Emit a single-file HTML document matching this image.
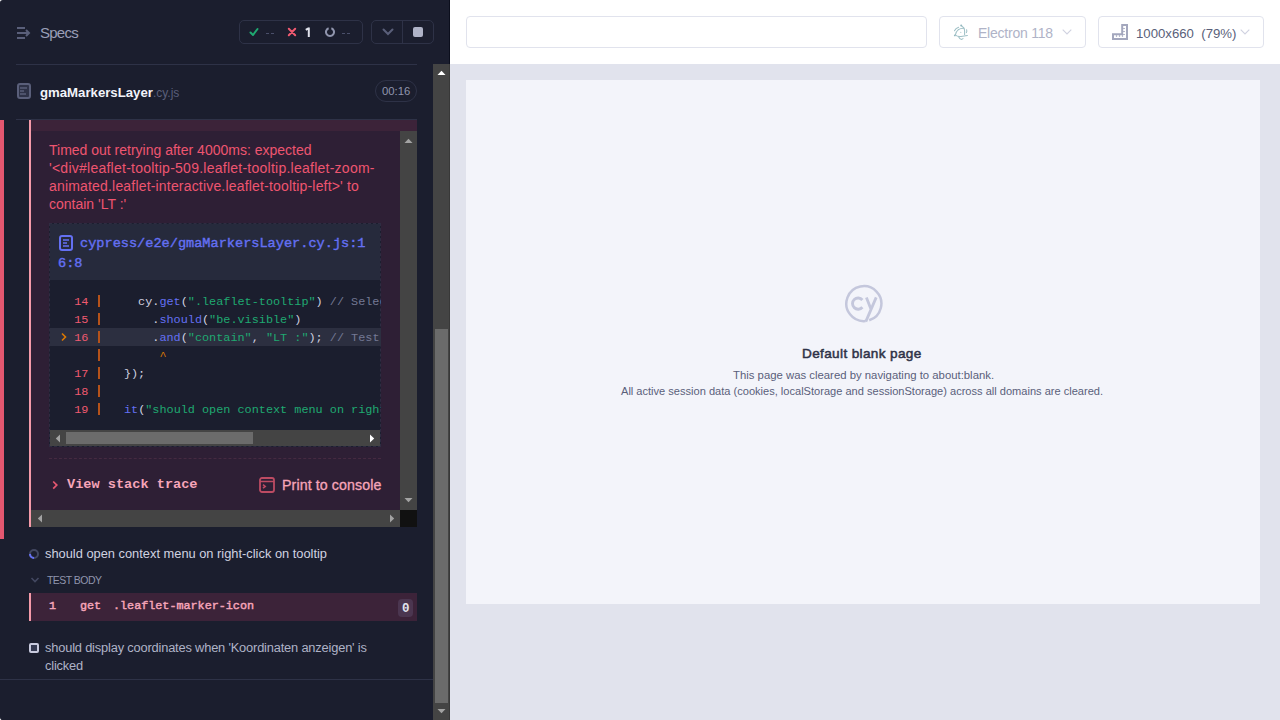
<!DOCTYPE html>
<html><head><meta charset="utf-8">
<style>
*{box-sizing:border-box;margin:0;padding:0}
html,body{width:1280px;height:720px;overflow:hidden;background:#e1e3ed;font-family:"Liberation Sans",sans-serif}
.a{position:absolute}
.t{position:absolute;white-space:pre;line-height:1}
.mono{font-family:"Liberation Mono",monospace}
#left{left:0;top:0;width:450px;height:720px;background:#1b1e2e;overflow:hidden}
#right{left:450px;top:0;width:830px;height:720px;background:#e1e3ed;overflow:hidden}
</style></head><body>
<div id="left" class="a">
  <!-- header -->
  <svg class="a" style="left:16px;top:26px" width="16" height="14" viewBox="0 0 16 14">
    <g stroke="#5a5f7a" stroke-width="2" fill="none">
      <path d="M1 2h8M1 7h12M1 12h8"/>
      <path d="M10 4l3 3-3 3" stroke-linejoin="miter"/>
    </g>
  </svg>
  <div class="t" style="left:40px;top:25px;font-size:15px;color:#9a9eb7;letter-spacing:-0.75px">Specs</div>

  <div class="a" style="left:239px;top:20px;width:124px;height:24px;border:1px solid #2e3247;border-radius:5px"></div>
  <svg class="a" style="left:249px;top:27px" width="10" height="10" viewBox="0 0 10 10"><path d="M1.5 5.5l2.5 2.5 4.5-6" stroke="#1fa971" stroke-width="2" fill="none" stroke-linecap="round" stroke-linejoin="round"/></svg>
  <div class="a" style="left:266px;top:33px;width:3px;height:1px;background:#4a4f6a"></div>
  <div class="a" style="left:271px;top:33px;width:3px;height:1px;background:#4a4f6a"></div>
  <svg class="a" style="left:287px;top:27px" width="10" height="10" viewBox="0 0 10 10"><path d="M1.8 1.8l6.4 6.4M8.2 1.8l-6.4 6.4" stroke="#f05a70" stroke-width="2" fill="none" stroke-linecap="round"/></svg>
  <svg class="a" style="left:305px;top:27px" width="6" height="10" viewBox="0 0 6 10"><path d="M3.8 0.5V10M3.8 1L0.8 2.8" stroke="#e1e3ed" stroke-width="2" fill="none"/></svg>
  <svg class="a" style="left:325px;top:27px" width="10" height="10" viewBox="0 0 10 10"><path d="M3.63 1.24A4 4 0 1 0 6.37 1.24" stroke="#9095ad" stroke-width="2" fill="none"/></svg>
  <div class="a" style="left:342px;top:33px;width:3px;height:1px;background:#4a4f6a"></div>
  <div class="a" style="left:347px;top:33px;width:3px;height:1px;background:#4a4f6a"></div>

  <div class="a" style="left:371px;top:20px;width:63px;height:24px;border:1px solid #2e3247;border-radius:5px"></div>
  <div class="a" style="left:402px;top:21px;width:1px;height:22px;background:#2e3247"></div>
  <svg class="a" style="left:382px;top:28px" width="12" height="8" viewBox="0 0 12 8"><path d="M1.5 1.5l4.5 4.5 4.5-4.5" stroke="#5a5f7a" stroke-width="2" fill="none" stroke-linecap="round"/></svg>
  <div class="a" style="left:413px;top:27px;width:10px;height:10px;background:#afb3c7;border-radius:2px"></div>

  <div class="a" style="left:16px;top:64px;width:401px;height:1px;background:#2e3247"></div>

  <!-- spec file row -->
  <svg class="a" style="left:17px;top:83px" width="14" height="16" viewBox="0 0 14 16">
    <rect x="1" y="1" width="12" height="14" rx="2" stroke="#5a5f7a" stroke-width="2" fill="#2e3247"/>
    <path d="M3 5h7M3 8h4M3 11h6" stroke="#5a5f7a" stroke-width="1.5"/>
  </svg>
  <div class="t" style="left:40px;top:86px;font-size:13.2px;font-weight:bold;color:#f3f4fa">gmaMarkersLayer<span style="font-weight:normal;color:#5a5f7a;font-size:12px">.cy.js</span></div>
  <div class="a" style="left:375px;top:80px;width:42px;height:22px;border:1px solid #2e3247;border-radius:11px"></div>
  <div class="t" style="left:382px;top:86px;font-size:11.3px;color:#9095ad">00:16</div>

  <div class="a" style="left:16px;top:119px;width:401px;height:1px;background:#2e3247"></div>

  <!-- error section -->
  <div class="a" style="left:0;top:120px;width:4px;height:419px;background:#e45770"></div>
  <div class="a" style="left:29px;top:120px;width:2px;height:407px;background:#f59aa9"></div>
  <div class="a" style="left:31px;top:120px;width:386px;height:11px;background:#3c2339"></div>
  <div class="a" style="left:31px;top:131px;width:386px;height:396px;background:#2e1f35"></div>

  <div class="t" style="left:49px;top:141px;font-size:14px;line-height:18px;color:#ee5570">Timed out retrying after 4000ms: expected
<span style="letter-spacing:0.25px">'&lt;div#leaflet-tooltip-509.leaflet-tooltip.leaflet-zoom-</span>
<span style="letter-spacing:0.18px">animated.leaflet-interactive.leaflet-tooltip-left&gt;' to</span>
contain 'LT :'</div>

  <!-- code frame -->
  <div class="a" style="left:49px;top:223px;width:332px;height:224px;border:1px dashed #2f2c42;background:#1b1e2e;overflow:hidden">
    <div class="a" style="left:0;top:0;width:332px;height:56px;background:#262a3c"></div>
  </div>
  <svg class="a" style="left:59px;top:235px" width="14" height="16" viewBox="0 0 14 16">
    <rect x="1" y="1" width="12" height="14" rx="2" stroke="#6470f3" stroke-width="2" fill="none"/>
    <path d="M4 5h6M4 8h4M4 11h6" stroke="#6470f3" stroke-width="1.5"/>
  </svg>
  <div class="t mono" style="left:80px;top:234px;font-size:13.6px;line-height:20px;-webkit-text-stroke:0.4px #6470f3;color:#6470f3">cypress/e2e/gmaMarkersLayer.cy.js:1</div>
  <div class="t mono" style="left:58px;top:253.5px;font-size:13.6px;line-height:20px;-webkit-text-stroke:0.4px #6470f3;color:#6470f3">6:8</div>

  <div class="a" style="left:50px;top:280px;width:331px;height:150px;overflow:hidden">
    <div class="a" style="left:0;top:48px;width:331px;height:18px;background:#2c2f40"></div>
    <svg class="a" style="left:10px;top:51px" width="8" height="12" viewBox="0 0 8 12"><path d="M2 2.5l3.5 3.5-3.5 3.5" stroke="#db7903" stroke-width="1.6" fill="none"/></svg>
    <div class="a" style="left:48px;top:15px;width:2px;height:12px;background:#b5521a"></div>
    <div class="a" style="left:48px;top:33px;width:2px;height:12px;background:#b5521a"></div>
    <div class="a" style="left:48px;top:51px;width:2px;height:12px;background:#b5521a"></div>
    <div class="a" style="left:48px;top:69px;width:2px;height:12px;background:#b5521a"></div>
    <div class="a" style="left:48px;top:87px;width:2px;height:12px;background:#b5521a"></div>
    <div class="a" style="left:48px;top:105px;width:2px;height:12px;background:#b5521a"></div>
    <div class="a" style="left:48px;top:123px;width:2px;height:12px;background:#b5521a"></div>
    <div class="t mono" style="left:-4.2px;top:12.5px;font-size:11.83px;line-height:18px;color:#d0d2e0">    <span style="color:#f05a70">14</span>       cy.<span style="color:#6470f3">get</span>(<span style="color:#1fa971">".leaflet-tooltip"</span>) <span style="color:#747994">// Select the tooltip</span>
    <span style="color:#f05a70">15</span>         .<span style="color:#6470f3">should</span>(<span style="color:#1fa971">"be.visible"</span>)
    <span style="color:#f05a70">16</span>         .<span style="color:#6470f3">and</span>(<span style="color:#1fa971">"contain"</span>, <span style="color:#1fa971">"LT :"</span>); <span style="color:#747994">// Test content</span>
                <span style="color:#db7903">^</span>
    <span style="color:#f05a70">17</span>     });
    <span style="color:#f05a70">18</span>
    <span style="color:#f05a70">19</span>     <span style="color:#6470f3">it</span>(<span style="color:#1fa971">"should open context menu on right-click on tooltip"</span>, () => {</div>
  </div>

  <!-- code hscroll -->
  <div class="a" style="left:50px;top:430px;width:330px;height:16px;background:#444"></div>
  <div class="a" style="left:66px;top:432px;width:187px;height:12px;background:#6b6b6b"></div>

  <!-- dashed sep -->
  <div class="a" style="left:49px;top:458px;width:332px;height:1px;border-top:1px dashed #452a41"></div>

  <svg class="a" style="left:51px;top:479px" width="8" height="12" viewBox="0 0 8 12"><path d="M2.2 2.5l3.6 3.6-3.6 3.6" stroke="#e45770" stroke-width="1.7" fill="none"/></svg>
  <div class="t mono" style="left:67px;top:478px;font-size:13.6px;font-weight:bold;color:#f6a5b9">View stack trace</div>
  <svg class="a" style="left:259px;top:477px" width="16" height="16" viewBox="0 0 16 16">
    <rect x="1" y="1" width="14" height="14" rx="2" stroke="#bd4b63" stroke-width="1.8" fill="none"/>
    <path d="M1 4.5h14" stroke="#bd4b63" stroke-width="1.5"/>
    <path d="M4 7.6l2.2 1.8-2.2 1.8" stroke="#bd4b63" stroke-width="1.6" fill="none"/>
  </svg>
  <div class="t" style="left:282px;top:478px;font-size:14.2px;letter-spacing:0.1px;-webkit-text-stroke:0.3px #f6a5b9;color:#f6a5b9">Print to console</div>

  <!-- error inner scrollbars -->
  <div class="a" style="left:400px;top:131px;width:17px;height:379px;background:#444"></div>
  <div class="a" style="left:31px;top:510px;width:369px;height:17px;background:#444"></div>
  <div class="a" style="left:400px;top:510px;width:17px;height:17px;background:#111"></div>

  <!-- test: should open context menu -->
  <svg class="a" style="left:29px;top:549px" width="10" height="10" viewBox="0 0 10 10">
    <circle cx="5" cy="5" r="4" stroke="#434861" stroke-width="2" fill="none"/>
    <path d="M1 5A4 4 0 0 0 5 9" stroke="#6470f3" stroke-width="2" fill="none"/>
  </svg>
  <div class="t" style="left:45px;top:548px;font-size:12.85px;color:#d0d2e0">should open context menu on right-click on tooltip</div>

  <svg class="a" style="left:30px;top:576px" width="10" height="8" viewBox="0 0 10 8"><path d="M1.5 2l3.5 3.5 3.5-3.5" stroke="#434861" stroke-width="1.6" fill="none"/></svg>
  <div class="t" style="left:47px;top:575px;font-size:10.5px;letter-spacing:-0.55px;color:#9095ad">TEST BODY</div>

  <div class="a" style="left:29px;top:593px;width:388px;height:28px;background:#3c2339"></div>
  <div class="a" style="left:29px;top:593px;width:2px;height:28px;background:#f59aa9"></div>
  <div class="t mono" style="left:49px;top:601px;font-size:11.75px;-webkit-text-stroke:0.45px #f6a5b9;color:#f6a5b9">1</div>
  <div class="t mono" style="left:80px;top:601px;font-size:11.75px;-webkit-text-stroke:0.45px #f6a5b9;color:#f6a5b9">get</div>
  <div class="t mono" style="left:113px;top:601px;font-size:11.75px;-webkit-text-stroke:0.45px #f6a5b9;color:#f6a5b9">.leaflet-marker-icon</div>
  <div class="a" style="left:398px;top:599px;width:15px;height:18px;background:#4b3650;border-radius:4px"></div>
  <div class="t mono" style="left:402px;top:602.5px;font-size:12.5px;font-weight:bold;color:#e1e3ed">0</div>

  <!-- test: should display coordinates -->
  <div class="a" style="left:29px;top:643px;width:10px;height:10px;border:2px solid #c8cade;background:#353a52;border-radius:2px"></div>
  <div class="t" style="left:45px;top:639px;font-size:12.85px;letter-spacing:-0.18px;line-height:18px;color:#afb3c7">should display coordinates when 'Koordinaten anzeigen' is
clicked</div>
  <div class="a" style="left:0;top:679px;width:433px;height:1px;background:#2e3247"></div>

  <!-- main scrollbar -->
  <div class="a" style="left:433px;top:64px;width:16px;height:656px;background:#444"></div>
  <div class="a" style="left:435px;top:329px;width:13px;height:374px;background:#6b6b6b"></div>
  <div class="a" style="left:449px;top:0;width:1px;height:64px;background:#0b0e1c"></div>
  <div class="a" style="left:449px;top:64px;width:1px;height:656px;background:#383838"></div>

  <!-- scroll arrows -->
  <svg class="a" style="left:437px;top:70px" width="9" height="5" viewBox="0 0 9 5"><path d="M0.5 5L4.5 0.8 8.5 5Z" fill="#ffffff"/></svg>
  <svg class="a" style="left:437px;top:709px" width="9" height="5" viewBox="0 0 9 5"><path d="M0.5 0L4.5 4.2 8.5 0Z" fill="#a3a3a3"/></svg>
  <svg class="a" style="left:404px;top:138px" width="9" height="5" viewBox="0 0 9 5"><path d="M0.5 5L4.5 0.8 8.5 5Z" fill="#a3a3a3"/></svg>
  <svg class="a" style="left:404px;top:498px" width="9" height="5" viewBox="0 0 9 5"><path d="M0.5 0L4.5 4.2 8.5 0Z" fill="#a3a3a3"/></svg>
  <svg class="a" style="left:37px;top:514px" width="5" height="9" viewBox="0 0 5 9"><path d="M5 0.5L0.8 4.5 5 8.5Z" fill="#a3a3a3"/></svg>
  <svg class="a" style="left:390px;top:514px" width="5" height="9" viewBox="0 0 5 9"><path d="M0 0.5L4.2 4.5 0 8.5Z" fill="#a3a3a3"/></svg>
  <svg class="a" style="left:55px;top:434px" width="5" height="9" viewBox="0 0 5 9"><path d="M5 0.5L0.8 4.5 5 8.5Z" fill="#a3a3a3"/></svg>
  <svg class="a" style="left:370px;top:434px" width="5" height="9" viewBox="0 0 5 9"><path d="M0 0.5L4.2 4.5 0 8.5Z" fill="#ffffff"/></svg>
</div>

<div id="right" class="a">
  <div class="a" style="left:0;top:0;width:830px;height:64px;background:#fff"></div>
  <div class="a" style="left:16px;top:16px;width:461px;height:32px;border:1px solid #e1e3ed;border-radius:4px"></div>
  <div class="a" style="left:489px;top:16px;width:147px;height:32px;border:1px solid #e1e3ed;border-radius:4px"></div>
  <div class="t" style="left:528px;top:26px;font-size:14px;letter-spacing:-0.22px;color:#afb3c7">Electron 118</div>
  <svg class="a" style="left:500px;top:20px" width="24" height="24" viewBox="0 0 24 24">
    <g stroke="#9fc0c6" stroke-width="1.05" fill="none" stroke-linecap="round">
      <path d="M11.8 6.2L13.6 7.6Q14.6 9 14.6 11V14.6"/>
      <path d="M14 8.3Q11 8 8.2 9.8Q5.4 12 5.4 15Q7 16.8 11 16.5L17.4 15.6"/>
      <path d="M4.5 10.8Q5.6 8.2 8.6 7.2"/>
      <path d="M16.6 9.8Q17.2 11.2 16.4 12.6"/>
      <path d="M8.6 16.8Q9.6 19.2 11.6 19.5L13 18.6"/>
    </g>
    <circle cx="11.2" cy="5.6" r="1" fill="#94b8bf"/>
    <circle cx="4.8" cy="15.4" r="0.9" fill="#94b8bf"/>
    <circle cx="10.8" cy="12.4" r="0.6" fill="#b5ced3"/>
  </svg>
  <svg class="a" style="left:612px;top:29px" width="10" height="6" viewBox="0 0 10 6"><path d="M0.7 0.7l4.3 4.3 4.3-4.3" stroke="#d0d2e0" stroke-width="1.1" fill="none"/></svg>
  <svg class="a" style="left:662px;top:24px" width="16" height="16" viewBox="0 0 16 16">
    <path d="M1 10.2H10.2V1H15V15H1Z" stroke="#a3a7bd" stroke-width="2" fill="none" stroke-linejoin="miter"/>
    <path d="M11.2 4.5h1.6M11.2 7.5h1.6M11.2 10.5h1.6M4.5 11.2v1.6M7.5 11.2v1.6M10.5 11.2v1.6" stroke="#a3a7bd" stroke-width="1.2"/>
  </svg>
  <svg class="a" style="left:790px;top:29px" width="10" height="6" viewBox="0 0 10 6"><path d="M0.7 0.7l4.3 4.3 4.3-4.3" stroke="#d0d2e0" stroke-width="1.1" fill="none"/></svg>

  <div class="a" style="left:648px;top:16px;width:166px;height:32px;border:1px solid #e1e3ed;border-radius:4px"></div>
  <div class="t" style="left:686px;top:27px;font-size:13.2px;color:#5a5f7a">1000x660  (79%)</div>

  <div class="a" style="left:16px;top:80px;width:794px;height:524px;background:#f3f4fa"></div>
  <svg class="a" style="left:394px;top:284px" width="40" height="40" viewBox="0 0 40 40">
    <g stroke="#c4c7dc" fill="none">
      <path d="M21.6 37.05A17.5 17.5 0 1 1 25.2 36.3" stroke-width="2.5"/>
      <path d="M18.4 16.0A5.6 5.6 0 1 0 18.4 23.2" stroke-width="2.9"/>
      <path d="M22.4 13.4L27 25.2M32.2 13.4L21.8 37.6" stroke-width="2.8"/>
    </g>
  </svg>
  <div class="t" style="left:352px;top:347px;font-size:13.6px;letter-spacing:0.35px;-webkit-text-stroke:0.5px #2e3247;color:#2e3247">Default blank page</div>
  <div class="t" style="left:283px;top:370px;font-size:11.35px;color:#5a5f7a">This page was cleared by navigating to about:blank.</div>
  <div class="t" style="left:171px;top:386px;font-size:11.07px;color:#5a5f7a">All active session data (cookies, localStorage and sessionStorage) across all domains are cleared.</div>
</div>
<svg class="a" style="left:0;top:0" width="4" height="4" viewBox="0 0 4 4"><path d="M0 0H2.8A2.8 2.8 0 0 0 0 2.8Z" fill="#fff"/></svg>
<svg class="a" style="left:0;top:716px" width="4" height="4" viewBox="0 0 4 4"><path d="M0 4H2.8A2.8 2.8 0 0 1 0 1.2Z" fill="#fff"/></svg>
</body></html>
